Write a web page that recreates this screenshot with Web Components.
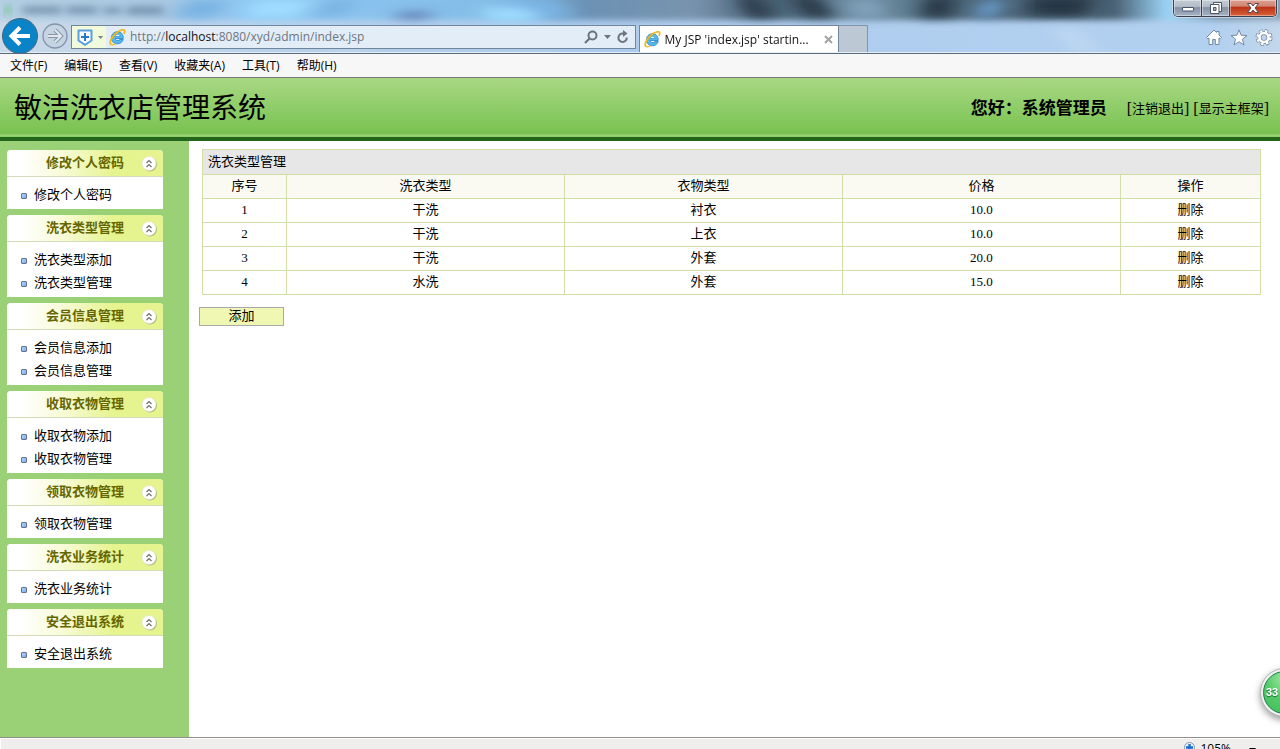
<!DOCTYPE html>
<html lang="zh-CN">
<head>
<meta charset="utf-8">
<title>敏洁洗衣店管理系统</title>
<style>
    html, body {
        margin: 0;
        height: 100%;
        overflow: hidden;
    }

    body {
        display: flex;
        flex-direction: column;
        background: #fff;
        color: #000;
        font-family: "Liberation Serif", "Noto Sans CJK SC", serif;
        font-size: 13px;
    }

    .workspace {
        display: flex;
        flex: 1;
        min-height: 0;
    }

    main {
        flex: 1;
        min-width: 0;
        padding: 8px 19px 0 13px;
    }
</style>
</head>
<body>
<browser-frame address="/xyd/admin/index.jsp" tab="My JSP 'index.jsp' startin..."></browser-frame>
<browser-menu></browser-menu>
<app-header user="系统管理员">敏洁洗衣店管理系统</app-header>
<div class="workspace">
    <side-bar>
        <menu-card heading="修改个人密码">
            <menu-link>修改个人密码</menu-link>
        </menu-card>
        <menu-card heading="洗衣类型管理">
            <menu-link>洗衣类型添加</menu-link>
            <menu-link>洗衣类型管理</menu-link>
        </menu-card>
        <menu-card heading="会员信息管理">
            <menu-link>会员信息添加</menu-link>
            <menu-link>会员信息管理</menu-link>
        </menu-card>
        <menu-card heading="收取衣物管理">
            <menu-link>收取衣物添加</menu-link>
            <menu-link>收取衣物管理</menu-link>
        </menu-card>
        <menu-card heading="领取衣物管理">
            <menu-link>领取衣物管理</menu-link>
        </menu-card>
        <menu-card heading="洗衣业务统计">
            <menu-link>洗衣业务统计</menu-link>
        </menu-card>
        <menu-card heading="安全退出系统">
            <menu-link>安全退出系统</menu-link>
        </menu-card>
    </side-bar>
    <main>
        <type-table></type-table>
        <add-button>添加</add-button>
    </main>
</div>
<status-bar></status-bar>
<speed-ball>33</speed-ball>

<script>
const IE_LOGO = `
    <svg class="ie" width="17" height="17" viewBox="0 0 17 17" aria-hidden="true">
        <path d="M14.200 9.500H6.200c.2 1.400 1.200 2.100 2.500 2.100 1 0 1.700-.4 2.100-1.100h3.500c-.8 2.600-3 4.300-5.800 4.300-3.500 0-6.100-2.500-6.100-6s2.600-6.100 6.100-6.100 6 2.700 5.700 6.800z" fill="#55b9ec" stroke="#2483c5" stroke-width=".8"/>
        <path d="M6.200 7.300h4.900c-.2-1.300-1.200-2-2.500-2s-2.200.7-2.400 2z" fill="#fff" stroke="#2483c5" stroke-width=".6"/>
        <path d="M2.500 15.700C-.6 14.300 2.300 8.500 6.700 4.500 10.600 1 15.300-.4 15.700 1.900c.1.900-.3 2-.8 2.900" fill="none" stroke="#f2b61c" stroke-width="1.700"/>
        <path d="M2.500 15.700c1.200.4 2.600 0 4-.9" fill="none" stroke="#f2b61c" stroke-width="1.300"/>
    </svg>`

class BrowserFrame extends HTMLElement {
    constructor() {
        super()

        const shadow = this.attachShadow({ mode: "open" })

        shadow.innerHTML = `
        <style>
            :host {
                display: block;
                position: relative;
                height: 53px;
                overflow: hidden;
                background: #b3cfee;
                border-bottom: 1px solid #5a6b7c;
                font-family: "Open Sans", "Noto Sans CJK SC", sans-serif;
                font-size: 12px;
            }

            .glass {
                position: absolute;
                inset: 0;
                width: 100%;
                height: 100%;
            }

            .window-buttons {
                position: absolute;
                top: 0;
                right: 3px;
                display: flex;
                height: 17px;
                box-sizing: border-box;
                border: 1px solid #39414d;
                border-top: 0;
                border-radius: 0 0 5px 5px;
                overflow: hidden;
                box-shadow: 0 0 0 1px #dbe6f2aa;
            }

            .window-buttons button {
                display: grid;
                place-items: center;
                width: 28px;
                padding: 0;
                border: 0;
                border-right: 1px solid #39414d;
                background: linear-gradient(#c3cbd5, #b4bdc9 40%, #8592a5 48%, #a6b3c6);
                box-shadow: inset 0 0 0 1px #ffffff66;
            }

            .window-buttons button:last-child {
                width: 46px;
                border-right: 0;
                background: linear-gradient(#dfa092, #d28473 38%, #bb3418 46%, #d9603a);
            }

            .bar {
                position: relative;
                display: grid;
                grid-template-columns: 68px minmax(0, 22fr) minmax(0, 25fr);
                column-gap: 3px;
                height: 35px;
                padding-top: 18px;
            }

            .nav {
                display: flex;
                align-items: center;
                gap: 4px;
                padding-left: 2px;
            }

            .nav button,
            .actions button,
            .tools button,
            .tab button {
                display: flex;
                padding: 0;
                border: 0;
                background: none;
            }

            .address {
                display: flex;
                align-items: center;
                height: 24px;
                margin-top: 7px;
                box-sizing: border-box;
                border: 1px solid #71869b;
                background: #e3edf8;
            }

            .shield {
                display: flex;
                align-items: center;
                gap: 5px;
                width: 34px;
                height: 22px;
                padding: 0 0 0 5px;
                border: 0;
                background: #f1fadb;
            }

            .address .ie {
                flex: none;
                margin: 0 4px 0 3px;
            }

            .field {
                flex: 1;
                min-width: 0;
                color: #6d7580;
                line-height: 24px;
                white-space: nowrap;
            }

            .field b {
                font-weight: 400;
                color: #111;
            }

            .actions {
                display: flex;
                align-items: center;
                gap: 6px;
                padding-right: 6px;
            }

            .right {
                display: flex;
                align-items: flex-start;
            }

            .tab {
                display: flex;
                align-items: center;
                gap: 4px;
                height: 27px;
                width: 200px;
                margin-top: 7px;
                padding: 0 5px 0 4px;
                box-sizing: border-box;
                border: 1px solid #71869b;
                border-bottom: 0;
                background: #fff;
                color: #111;
            }

            .tab span {
                flex: 1;
                white-space: nowrap;
            }

            .new-tab {
                width: 29px;
                height: 27px;
                margin-top: 7px;
                padding: 0;
                box-sizing: border-box;
                border: 1px solid #8495a8;
                border-left: 0;
                border-bottom: 0;
                background: #bcc8d4;
            }

            .tools {
                display: flex;
                gap: 7px;
                margin: 11px 7px 0 auto;
            }

            .edge {
                position: absolute;
                inset: auto 0 0;
                height: 1px;
                background: #e6eef7;
            }
        </style>

        <svg class="glass" viewBox="0 0 1280 53" preserveAspectRatio="none" aria-hidden="true">
            <defs>
                <filter id="soft" x="-20%" y="-80%" width="140%" height="260%"><feGaussianBlur stdDeviation="10 4"/></filter>
                <filter id="smudge" x="-10%" y="-80%" width="120%" height="260%"><feGaussianBlur stdDeviation="5 3"/></filter>
                <linearGradient id="base">
                    <stop offset="0" stop-color="#cbd9e8"/>
                    <stop offset=".2" stop-color="#b9d2ec"/>
                    <stop offset=".45" stop-color="#adcbec"/>
                    <stop offset=".95" stop-color="#b2d0f0"/>
                    <stop offset="1" stop-color="#c3d7ec"/>
                </linearGradient>
                <linearGradient id="strip">
                    <stop offset="0" stop-color="#b5cfe2"/>
                    <stop offset=".14" stop-color="#aac8e2"/>
                    <stop offset=".2" stop-color="#8fc8f3"/>
                    <stop offset=".4" stop-color="#83bde6"/>
                    <stop offset=".46" stop-color="#6c92b5"/>
                    <stop offset=".54" stop-color="#7893ad"/>
                    <stop offset=".6" stop-color="#4b6276"/>
                    <stop offset=".67" stop-color="#6f8fa4"/>
                    <stop offset=".74" stop-color="#4d6678"/>
                    <stop offset=".86" stop-color="#4a6275"/>
                    <stop offset=".9" stop-color="#9dd6f8"/>
                    <stop offset=".94" stop-color="#7690a5"/>
                    <stop offset="1" stop-color="#8fa5b8"/>
                </linearGradient>
            </defs>
            <rect width="1280" height="53" fill="url(#base)"/>
            <rect x="-20" y="-12" width="1320" height="32" fill="url(#strip)" filter="url(#smudge)"/>
            <g filter="url(#soft)">
                <path d="M190 0h40l-15 18h-45zM330 0h30l-20 16h-30zM500 0h55l20 18h-50z" fill="#79b3e3"/>
                <path d="M255 0h60l-20 18h-50zM480 8h45l20 13h-55z" fill="#9fdcff"/>
                <path d="M400 12h35l-10 7h-30z" fill="#6079ac"/>
                <path d="M735-4h25l12 22h-22zM788-4h30l18 22h-30zM925-4h30l-5 22h-30zM1030-4h65l-10 20h-55z" fill="#1d303d" opacity=".85"/>
                <path d="M845 0h35l5 18h-30z" fill="#7fa2ba"/>
                <path d="M985 0h18l-10 18h-18z" fill="#6fa6dc"/>
                <path d="M320 28h20l30 25h-35zM640 28h45l30 25h-45zM1050 28h25l28 25h-28z" fill="#c7ddf4" opacity=".6"/>
            </g>
            <g filter="url(#smudge)" fill="#5f7c99" opacity=".6">
                <rect x="23" y="6" width="38" height="8"/>
                <rect x="67" y="6" width="30" height="8"/>
                <rect x="104" y="7" width="17" height="7"/>
                <rect x="127" y="6" width="36" height="9"/>
            </g>
            <rect x="4" y="6" width="8" height="8" fill="#7cc9a0" filter="url(#smudge)"/>
        </svg>
        <div class="edge"></div>

        <div class="window-buttons">
            <button aria-label="最小化">
                <svg width="14" height="12" viewBox="0 0 14 12"><rect x="1.500" y="5.500" width="11" height="3.500" rx=".5" fill="#fff" stroke="#4a5566"/></svg>
            </button>
            <button aria-label="还原">
                <svg width="14" height="14" viewBox="0 0 14 14"><path d="M4.500 1.500h8v9h-8z" fill="#fff" stroke="#4a5566"/><path d="M1.500 3.500h8.500v9H1.500z" fill="#fff" stroke="#4a5566"/><path d="M4.500 6.500H7v3H4.500z" fill="#a9b5c4" stroke="#4a5566"/></svg>
            </button>
            <button aria-label="关闭">
                <svg width="14" height="12" viewBox="0 0 14 12"><path d="M1.500 1.500h3.500l2 2.500 2-2.500h3.500l-3.500 4.500 3.500 4.500H9L7 8l-2 2.500H1.500L5 6z" fill="#fff" stroke="#5b4650"/></svg>
            </button>
        </div>

        <div class="bar">
            <div class="nav">
                <button aria-label="后退">
                    <svg width="36" height="36" viewBox="0 0 36 36"><circle cx="18" cy="18" r="17.500" fill="#0a84c6" stroke="#47647c"/><path d="M18 9.500 9.500 18l8.500 8.500M10 18h18" fill="none" stroke="#fff" stroke-width="4"/></svg>
                </button>
                <button aria-label="前进">
                    <svg width="26" height="26" viewBox="0 0 26 26"><circle cx="13" cy="13" r="12" fill="#c3d1df" fill-opacity=".6" stroke="#8494a6" stroke-width="1.300"/><path d="m13 7 6 6-6 6M18 13H6" fill="none" stroke="#8797a9" stroke-width="4"/><path d="m13 7 6 6-6 6M18 13H6" fill="none" stroke="#dfe8f1" stroke-width="2"/></svg>
                </button>
            </div>

            <div class="address">
                <button class="shield" aria-label="安全">
                    <svg width="16" height="17" viewBox="0 0 16 17"><path d="M1.500 1.500h13v10L8 15.800 1.500 11.500z" fill="#fff" stroke="#5a9fe0" stroke-width="2" stroke-linejoin="round"/><path d="M8 4v8M4 8h8" stroke="#2878cf" stroke-width="2"/></svg>
                    <svg width="5" height="3" viewBox="0 0 5 3"><path d="M0 0h5L2.500 3z" fill="#77818b"/></svg>
                </button>
                ${IE_LOGO}
                <div class="field">http://<b>localhost</b>:8080${this.getAttribute("address")}</div>
                <div class="actions">
                    <button aria-label="搜索"><svg width="14" height="14" viewBox="0 0 14 14"><circle cx="8.500" cy="5.500" r="4" fill="none" stroke="#697480" stroke-width="2"/><path d="m5.500 8.500-4.500 4.500" stroke="#697480" stroke-width="2.200"/></svg></button>
                    <svg width="7" height="4" viewBox="0 0 7 4"><path d="M0 0h7L3.500 4z" fill="#697480"/></svg>
                    <button aria-label="刷新"><svg width="12" height="14" viewBox="0 0 12 14"><path d="M9.800 7.500A4.200 4.200 0 1 1 6 3.500h1" fill="none" stroke="#697480" stroke-width="2"/><path d="M6 0v7l4.500-3.500z" fill="#697480"/></svg></button>
                </div>
            </div>

            <div class="right">
                <div class="tab">
                    ${IE_LOGO}
                    <span>${this.getAttribute("tab")}</span>
                    <button aria-label="关闭选项卡"><svg width="9" height="9" viewBox="0 0 9 9"><path d="m1 1 7 7M8 1 1 8" stroke="#a3a3a3" stroke-width="2"/></svg></button>
                </div>
                <button class="new-tab" aria-label="新建选项卡"></button>
                <div class="tools">
                    <button aria-label="主页"><svg width="18" height="17" viewBox="0 0 18 17"><path d="M9 1 1.500 8.500l1.200 1.200L4 9v6.500h3.700v-5h2.600v5H14V9l1.300.7 1.200-1.200L14 6V2.500h-2.500v1z" fill="#fff" stroke="#75889f"/></svg></button>
                    <button aria-label="收藏"><svg width="18" height="17" viewBox="0 0 18 17"><path d="m9 .8 2.100 5.400 5.900.3-4.600 3.700 1.600 5.800L9 12.700 4 16l1.600-5.800L1 6.500l5.900-.3z" fill="#fff" stroke="#75889f"/></svg></button>
                    <button aria-label="工具"><svg width="18" height="17" viewBox="0 0 18 17"><g fill="none"><circle cx="9" cy="8.500" r="6.500" stroke="#75889f" stroke-width="4" stroke-dasharray="3.100 2"/><circle cx="9" cy="8.500" r="4.500" stroke="#75889f" stroke-width="4"/><circle cx="9" cy="8.500" r="6.500" stroke="#fff" stroke-width="2.400" stroke-dasharray="2.400 2.700" stroke-dashoffset="-.3"/><circle cx="9" cy="8.500" r="4.500" stroke="#fff" stroke-width="2.600"/></g></svg></button>
                </div>
            </div>
        </div>
        `
    }
}

class BrowserMenu extends HTMLElement {
    constructor() {
        super()

        const shadow = this.attachShadow({ mode: "open" })
        const entries = ["文件(F)", "编辑(E)", "查看(V)", "收藏夹(A)", "工具(T)", "帮助(H)"]

        shadow.innerHTML = `
        <style>
            :host {
                display: block;
                background: #f7f7f7;
                border-bottom: 1px solid #777;
            }

            nav {
                display: flex;
                gap: 17px;
                height: 23px;
                padding-left: 10px;
            }

            button {
                padding: 0;
                border: 0;
                background: none;
                color: #000;
                font: 12px/23px "Open Sans", "Noto Sans CJK SC", sans-serif;
            }
        </style>

        <nav>${entries.map(entry => `<button>${entry}</button>`).join("")}</nav>
        `
    }
}

class AppHeader extends HTMLElement {
    constructor() {
        super()

        const shadow = this.attachShadow({ mode: "open" })

        shadow.innerHTML = `
        <style>
            :host {
                display: flex;
                align-items: center;
                height: 56px;
                padding: 3px 11px 0 14px;
                background: linear-gradient(#a9d885, #78c24f 56px, #a0d67c 57px, #8acb62);
                border-bottom: 4px solid #23651a;
            }

            h1 {
                flex: 1;
                margin: 0;
                font-size: 28px;
                font-weight: 400;
                line-height: 40px;
            }

            strong {
                margin-right: 20px;
                font-size: 17px;
                line-height: 24px;
            }

            nav {
                display: flex;
                gap: 4px;
                font-size: 16px;
                line-height: 24px;
            }

            a {
                color: #000;
                font-size: 13px;
                text-decoration: none;
            }

            span {
                display: flex;
                align-items: center;
            }
        </style>

        <h1><slot></slot></h1>
        <strong>您好：${this.getAttribute("user")}</strong>
        <nav>
            <span>[<a href="#">注销退出</a>]</span>
            <span>[<a href="#">显示主框架</a>]</span>
        </nav>
        `
    }
}

class SideBar extends HTMLElement {
    constructor() {
        super()

        const shadow = this.attachShadow({ mode: "open" })

        shadow.innerHTML = `
        <style>
            :host {
                display: flex;
                flex-direction: column;
                gap: 6px;
                width: 189px;
                padding: 9px 26px 0 7px;
                box-sizing: border-box;
                background: #9ad176;
            }
        </style>

        <slot></slot>
        `
    }
}

class MenuCard extends HTMLElement {
    constructor() {
        super()

        const shadow = this.attachShadow({ mode: "open" })

        shadow.innerHTML = `
        <style>
            :host {
                display: block;
                background: #fff;
                border-radius: 4px 4px 0 0;
            }

            header {
                display: grid;
                grid-template-columns: 22px 1fr 22px;
                align-items: center;
                height: 26px;
                border-bottom: 1px solid #d3dcb9;
                border-radius: 4px 4px 0 0;
                background: linear-gradient(90deg, #fff 8%, #f8fbd8 35%, #e5f48f 68%, #e5f48f);
            }

            h2 {
                grid-column: 2;
                margin: 0;
                color: #666600;
                font-size: 13px;
                line-height: 24px;
                text-align: center;
            }

            button {
                display: flex;
                padding: 0;
                border: 0;
                background: none;
            }

            .items {
                padding: 6px 0 3px;
            }
        </style>

        <header>
            <h2>${this.getAttribute("heading")}</h2>
            <button aria-label="收起">
                <svg width="17" height="17" viewBox="0 0 17 17">
                    <circle cx="9" cy="9.500" r="7" fill="#a9b07c" opacity=".8"/>
                    <circle cx="8" cy="8.500" r="7" fill="#fff" stroke="#d9dccb" stroke-width=".5"/>
                    <path d="m5.500 8 2.500-2.500L10.500 8M5.500 12 8 9.500l2.500 2.500" fill="none" stroke="#6e6e6e" stroke-width="1.200"/>
                </svg>
            </button>
        </header>
        <div class="items"><slot></slot></div>
        `
    }
}

class MenuLink extends HTMLElement {
    constructor() {
        super()

        const shadow = this.attachShadow({ mode: "open" })

        shadow.innerHTML = `
        <style>
            :host {
                display: flex;
                align-items: center;
                gap: 7px;
                height: 23px;
                padding-left: 14px;
            }

            i {
                width: 4px;
                height: 4px;
                margin-top: 2px;
                border: 1px solid #63718a;
                border-radius: 1px;
                background: linear-gradient(135deg, #b5d5ff, #78a9ee);
            }

            a {
                color: #000;
                font-size: 13px;
                line-height: 23px;
                text-decoration: none;
            }
        </style>

        <i></i>
        <a href="#"><slot></slot></a>
        `
    }
}

class TypeTable extends HTMLElement {
    constructor() {
        super()

        const shadow = this.attachShadow({ mode: "open" })
        const rows = [
            ["干洗", "衬衣", "10.0"],
            ["干洗", "上衣", "10.0"],
            ["干洗", "外套", "20.0"],
            ["水洗", "外套", "15.0"]
        ]

        shadow.innerHTML = `
        <style>
            :host {
                display: block;
            }

            table {
                width: 100%;
                border-collapse: collapse;
                table-layout: fixed;
                font-size: 13px;
                line-height: 21px;
                text-align: center;
            }

            .no {
                width: 84px;
            }

            .act {
                width: 140px;
            }

            th,
            td {
                height: 21px;
                padding: 0 0 2px;
                box-sizing: content-box;
                border: 1px solid #d2dea8;
                font-weight: 400;
            }

            .title th {
                height: 22px;
                padding-left: 5px;
                background: #e7e7e7;
                text-align: left;
            }

            .heads th {
                background: #fafaf3;
            }

            a {
                color: #000;
                text-decoration: none;
            }
        </style>

        <table>
            <colgroup><col class="no"><col><col><col><col class="act"></colgroup>
            <thead>
                <tr class="title"><th colspan="5">洗衣类型管理</th></tr>
                <tr class="heads"><th>序号</th><th>洗衣类型</th><th>衣物类型</th><th>价格</th><th>操作</th></tr>
            </thead>
            <tbody>
                ${rows.map((row, i) => `
                <tr><td>${i + 1}</td>${row.map(cell => `<td>${cell}</td>`).join("")}<td><a href="#">删除</a></td></tr>`).join("")}
            </tbody>
        </table>
        `
    }
}

class AddButton extends HTMLElement {
    constructor() {
        super()

        const shadow = this.attachShadow({ mode: "open" })

        shadow.innerHTML = `
        <style>
            :host {
                display: block;
                margin: 12px 0 0 -3px;
            }

            button {
                display: block;
                width: 85px;
                height: 19px;
                padding: 0 0 2px;
                border: 1px solid #a9a9a9;
                background: #f0f7b3;
                color: #000;
                font-family: inherit;
                font-size: 13px;
                line-height: 15px;
            }
        </style>

        <button><slot></slot></button>
        `
    }
}

class StatusBar extends HTMLElement {
    constructor() {
        super()

        const shadow = this.attachShadow({ mode: "open" })

        shadow.innerHTML = `
        <style>
            :host {
                display: flex;
                justify-content: flex-end;
                align-items: flex-start;
                height: 11px;
                padding-right: 24px;
                overflow: hidden;
                border-top: 1px solid #8f8f8f;
                background: #f0eded;
                box-shadow: inset 1px 1px #fff;
                font: 12px/14px "Open Sans", sans-serif;
            }

            button {
                display: flex;
                gap: 4px;
                padding: 4px 0 0;
                border: 0;
                background: none;
                color: #000;
                font: inherit;
            }

            .arrow {
                margin: 6px 0 0 14px;
            }
        </style>

        <button>
            <svg width="12" height="14" viewBox="0 0 12 14" aria-hidden="true"><circle cx="5.500" cy="5.500" r="5" fill="#e9f3ff" stroke="#8796a8"/><path d="M5.500 2v7M2 5.500h7" stroke="#1a6fd0" stroke-width="2.400"/></svg>
            <span>105%</span>
            <svg class="arrow" width="7" height="4" viewBox="0 0 7 4" aria-hidden="true"><path d="M0 0h7L3.500 4z"/></svg>
        </button>
        `
    }
}

class SpeedBall extends HTMLElement {
    constructor() {
        super()

        const shadow = this.attachShadow({ mode: "open" })

        shadow.innerHTML = `
        <style>
            /* docked to the right edge, half out of view */
            :host {
                display: block;
                position: fixed;
                right: -29px;
                bottom: 32px;
                width: 49px;
                height: 49px;
                box-sizing: border-box;
                padding: 2px;
                border: 1px solid #b5b5b5;
                border-radius: 50%;
                background: #f2f2f2;
                box-shadow: 0 3px 7px #0006;
            }

            div {
                height: 43px;
                padding-left: 2px;
                box-sizing: border-box;
                border: 1px solid #188049;
                border-radius: 50%;
                background: radial-gradient(circle at 50% 15%, #a2e6a4, #56cb68 45%, #43bd5d);
                color: #fff;
                font: bold 11px/41px "Liberation Sans", sans-serif;
                text-shadow: 0 1px 1px #176b38;
            }
        </style>

        <div><slot></slot></div>
        `
    }
}

customElements.define("browser-frame", BrowserFrame)
customElements.define("browser-menu", BrowserMenu)
customElements.define("app-header", AppHeader)
customElements.define("side-bar", SideBar)
customElements.define("menu-card", MenuCard)
customElements.define("menu-link", MenuLink)
customElements.define("type-table", TypeTable)
customElements.define("add-button", AddButton)
customElements.define("status-bar", StatusBar)
customElements.define("speed-ball", SpeedBall)
</script>
</body>
</html>
